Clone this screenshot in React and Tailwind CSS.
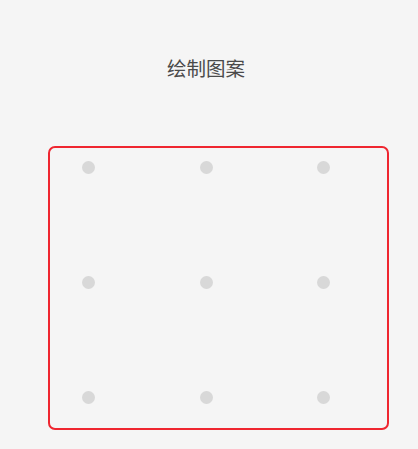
export default function App() {
  const rows = [0, 1, 2];
  return (
    <div className="w-[418px] h-[449px] bg-[#f5f5f5] overflow-hidden" style={{ fontFamily: '"Noto Sans CJK SC", "Noto Sans", sans-serif' }}>
      <div className="pt-[54px] pr-[6px] text-center text-[19.5px] leading-[28px] text-[#4a4a4a]">绘制图案</div>
      <div className="mt-[64px] ml-[48px] w-[341px] h-[284px] border-2 border-[#ef2630] rounded-[7px] pt-[13px] pl-[32px] flex flex-col gap-[102px]">
        {rows.map((r) => (
          <div key={r} className="flex gap-[104.5px]">
            {rows.map((c) => (
              <div key={c} className="w-[13px] h-[13px] rounded-full bg-[#d8d8d8]" />
            ))}
          </div>
        ))}
      </div>
    </div>
  );
}
